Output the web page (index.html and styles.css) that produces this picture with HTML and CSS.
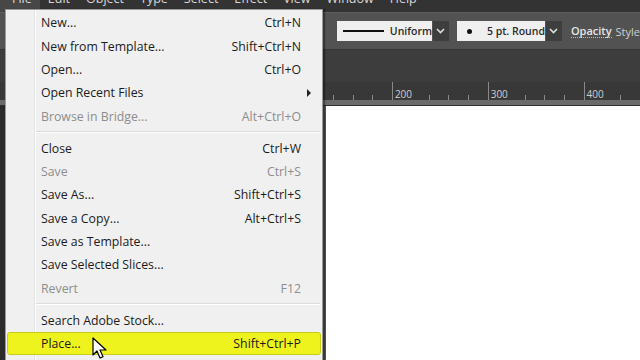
FILE: index.html
```html
<!DOCTYPE html>
<html lang="en">
<head>
    <meta charset="UTF-8">
    <title>Illustrator - File menu</title>
    <link rel="stylesheet" href="styles.css">
</head>
<body>
    <div class="app">
        <div class="menubar">
            <span class="active">File</span>
            <span>Edit</span>
            <span>Object</span>
            <span>Type</span>
            <span>Select</span>
            <span>Effect</span>
            <span>View</span>
            <span>Window</span>
            <span>Help</span>
        </div>

        <div class="controlbar">
            <div class="dropdown stroke">
                <span class="line"></span>
                <span>Uniform</span>
            </div>
            <div class="chevron">
                <svg width="9" height="6" viewBox="0 0 9 6"><path d="M1 1l3.5 3.5L8 1" fill="none" stroke="#ddd" stroke-width="1.6"/></svg>
            </div>
            <div class="dropdown brush">
                <span class="dot"></span>
                <span>5 pt. Round</span>
            </div>
            <div class="chevron">
                <svg width="9" height="6" viewBox="0 0 9 6"><path d="M1 1l3.5 3.5L8 1" fill="none" stroke="#ddd" stroke-width="1.6"/></svg>
            </div>
            <span class="link">Opacity</span>
            <span class="label">Style</span>
        </div>

        <div class="tabband"></div>

        <div class="ruler">
            <div class="ticks">
                <span class="minor"></span><span class="minor"></span><span class="minor"></span>
                <span class="major">200</span>
                <span class="minor"></span><span class="minor"></span><span class="minor"></span>
                <span class="major">300</span>
                <span class="minor"></span><span class="minor"></span><span class="minor"></span>
                <span class="major">400</span>
                <span class="minor"></span>
            </div>
        </div>
        <div class="ruler-edge"></div>

        <div class="canvas"></div>
    </div>

    <!-- File menu dropdown -->
    <div class="filemenu">
        <div class="item"><span>New...</span><span class="key">Ctrl+N</span></div>
        <div class="item"><span>New from Template...</span><span class="key">Shift+Ctrl+N</span></div>
        <div class="item"><span>Open...</span><span class="key">Ctrl+O</span></div>
        <div class="item"><span>Open Recent Files</span><span class="arrow"></span></div>
        <div class="item disabled"><span>Browse in Bridge...</span><span class="key">Alt+Ctrl+O</span></div>
        <div class="separator"></div>
        <div class="item"><span>Close</span><span class="key">Ctrl+W</span></div>
        <div class="item disabled"><span>Save</span><span class="key">Ctrl+S</span></div>
        <div class="item"><span>Save As...</span><span class="key">Shift+Ctrl+S</span></div>
        <div class="item"><span>Save a Copy...</span><span class="key">Alt+Ctrl+S</span></div>
        <div class="item"><span>Save as Template...</span><span class="key"></span></div>
        <div class="item"><span>Save Selected Slices...</span><span class="key"></span></div>
        <div class="item disabled"><span>Revert</span><span class="key">F12</span></div>
        <div class="separator"></div>
        <div class="item"><span>Search Adobe Stock...</span><span class="key"></span></div>
        <div class="item highlighted">
            <span>Place...</span><span class="key">Shift+Ctrl+P</span>
            <svg class="cursor" width="16" height="22" viewBox="0 0 16 22">
                <path d="M1 1v17l4-4 3 7 3-1.3-3-6.7h6z" fill="#fff" stroke="#000" stroke-width="1.2" stroke-linejoin="round"/>
            </svg>
        </div>
    </div>
</body>
</html>
```

FILE: styles.css
```css
body {
    margin: 0;
    width: 640px;
    height: 360px;
    overflow: hidden;
    font-family: "Open Sans", "Noto Sans", sans-serif;
    background-color: #2b2b2b;
    position: relative;
}

.app {
    display: flex;
    flex-direction: column;
    height: 360px;
}

.menubar {
    height: 12px;
    background-color: #333333;
    display: flex;
    overflow: hidden;
    color: #d8d8d8;
    font-size: 12.5px;
}

.menubar span {
    line-height: 14px;
    margin-top: -8px;
    padding: 0 8px;
}

.menubar .active {
    background-color: #474747;
    padding-left: 12px;
}

.controlbar {
    height: 36px;
    background-color: #525252;
    border-top: 1px solid #5e5e5e;
    display: flex;
    align-items: center;
    padding-left: 337px;
    color: #e6e6e6;
    font-size: 11px;
    white-space: nowrap;
}

.dropdown {
    height: 20px;
    background-color: #efefef;
    display: flex;
    align-items: center;
    color: #2a2a2a;
    font-weight: 600;
    font-size: 10.5px;
    box-sizing: border-box;
    white-space: nowrap;
}

.stroke {
    width: 95px;
    padding-left: 6px;
}

.stroke .line {
    width: 42px;
    height: 2px;
    background-color: #111;
    margin-right: 6px;
}

.brush {
    width: 92px;
    padding-left: 10px;
    margin-left: 8px;
}

.brush .dot {
    width: 5px;
    height: 5px;
    border-radius: 50%;
    background-color: #111;
    margin-right: 15px;
}

.chevron {
    width: 17px;
    height: 20px;
    background-color: #3e3e3e;
    margin-left: 1px;
    display: flex;
    align-items: center;
    justify-content: center;
}

.link {
    margin-left: 9px;
    font-weight: 600;
    border-bottom: 1px dotted #bbb;
    line-height: 12px;
}

.label {
    margin-left: 4px;
    color: #cfcfcf;
}

.tabband {
    height: 32px;
    background-color: #3d3d3d;
    border-top: 1px solid #353535;
}

.ruler {
    height: 18px;
    background-color: #383838;
    padding-left: 333px;
    color: #cfcfcf;
    font-size: 10px;
}

.ticks {
    display: flex;
    height: 18px;
    align-items: flex-end;
}

.ticks .minor {
    width: 1px;
    height: 5px;
    background-color: #8a8a8a;
    margin-right: 18.7px;
}

.ticks .major {
    height: 18px;
    border-left: 1px solid #8a8a8a;
    padding-left: 2px;
    width: 36.4px;
    line-height: 24px;
}

.ruler-edge {
    height: 5px;
    background-color: #6a6a6a;
    border-bottom: 1px solid #2e2e2e;
}

.canvas {
    flex: 1;
    background-color: #ffffff;
    border-left: 3px solid #555;
    margin-left: 323px;
}

.filemenu {
    position: absolute;
    left: 5px;
    top: 9px;
    width: 316px;
    height: 360px;
    background-color: #f0f0f0;
    border: 1px solid #9a9a9a;
    box-shadow: 2px 0 1px rgba(0, 0, 0, 0.35);
    padding-top: 1px;
    font-size: 12.3px;
    color: #1b1b1b;
    background-image: linear-gradient(to right, transparent 28px, #e2e2e2 28px, #e2e2e2 29px, #ffffff 29px, #ffffff 30px, transparent 30px);
}

.item {
    height: 23.35px;
    display: flex;
    align-items: center;
    justify-content: space-between;
    padding-left: 35px;
    padding-right: 21px;
    position: relative;
}

.item.disabled {
    color: #8d8d8d;
}

.arrow {
    width: 0;
    height: 0;
    border-top: 4px solid transparent;
    border-bottom: 4px solid transparent;
    border-left: 4px solid #222;
    margin-right: -10px;
}

.separator {
    height: 8.7px;
    display: flex;
    align-items: center;
    padding-left: 30px;
    padding-right: 2px;
}

.separator::after {
    content: "";
    flex: 1;
    height: 1px;
    background-color: #dcdcdc;
    border-bottom: 1px solid #ffffff;
}

.item.highlighted {
    background-color: #eef21d;
    border: 1px solid #c9cc16;
    border-radius: 3px;
    margin: 0 1px;
    padding-left: 33px;
    padding-right: 19px;
    box-sizing: border-box;
}

.cursor {
    position: absolute;
    left: 84px;
    top: 4px;
}
```
